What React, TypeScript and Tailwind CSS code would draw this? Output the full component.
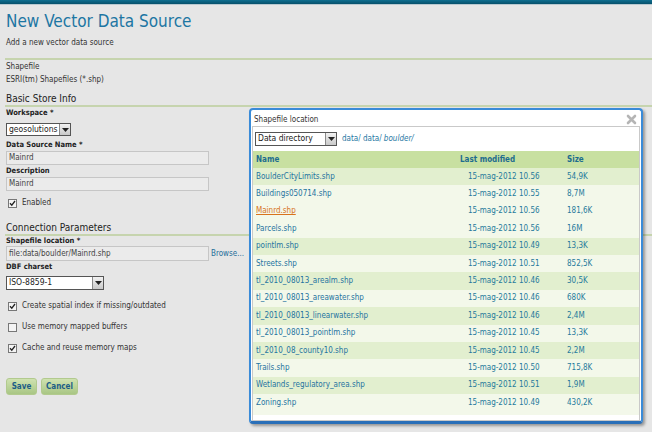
import React from 'react'

const files = [
  { name: 'BoulderCityLimits.shp', date: '15-mag-2012 10.56', size: '54,9K' },
  { name: 'Buildings050714.shp', date: '15-mag-2012 10.55', size: '8,7M' },
  { name: 'Mainrd.shp', date: '15-mag-2012 10.56', size: '181,6K', hover: true },
  { name: 'Parcels.shp', date: '15-mag-2012 10.56', size: '16M' },
  { name: 'pointlm.shp', date: '15-mag-2012 10.49', size: '13,3K' },
  { name: 'Streets.shp', date: '15-mag-2012 10.51', size: '852,5K' },
  { name: 'tl_2010_08013_arealm.shp', date: '15-mag-2012 10.46', size: '30,5K' },
  { name: 'tl_2010_08013_areawater.shp', date: '15-mag-2012 10.46', size: '680K' },
  { name: 'tl_2010_08013_linearwater.shp', date: '15-mag-2012 10.46', size: '2,4M' },
  { name: 'tl_2010_08013_pointlm.shp', date: '15-mag-2012 10.45', size: '13,3K' },
  { name: 'tl_2010_08_county10.shp', date: '15-mag-2012 10.45', size: '2,2M' },
  { name: 'Trails.shp', date: '15-mag-2012 10.50', size: '715,8K' },
  { name: 'Wetlands_regulatory_area.shp', date: '15-mag-2012 10.51', size: '1,9M' },
  { name: 'Zoning.shp', date: '15-mag-2012 10.49', size: '430,2K' },
]

const font = "font-['DejaVu_Sans_Condensed','DejaVu_Sans',sans-serif]"

const Arrow = () => (
  <span className="flex items-center justify-center w-[11px] h-full bg-gradient-to-b from-[#f2f2f2] to-[#c9c9c9] border-l border-[#8a8a8a]">
    <svg width="7" height="4" viewBox="0 0 7 4"><path d="M0 0h7L3.5 4z" fill="#222" /></svg>
  </span>
)

const Select = ({ value, w, h = 'h-[13px]' }: { value: string; w: string; h?: string }) => (
  <div className={`flex ${h} ${w} bg-white border border-[#555] text-[8.5px] leading-[11px] text-[#222]`}>
    <span className="flex-1 pl-[2px] overflow-hidden whitespace-nowrap">{value}</span>
    <Arrow />
  </div>
)

const Check = ({ checked, label }: { checked: boolean; label: string }) => (
  <div className="flex items-center h-[12px] pl-[2px]">
    <span className="flex items-center justify-center w-[9px] h-[9px] border border-[#777] bg-[#f4f4f4]">
      {checked && (
        <svg width="7" height="7" viewBox="0 0 7 7"><path d="M1 3.2l1.8 2L6 1" stroke="#222" strokeWidth="1.3" fill="none" /></svg>
      )}
    </span>
    <span className="ml-[5px] text-[8px] text-[#333]">{label}</span>
  </div>
)

const Input = ({ value, h = 'h-[14px]' }: { value: string; h?: string }) => (
  <div className={`flex items-center ${h} w-[203px] border border-[#c6c6c6] bg-[#ebebeb] text-[8px] text-[#444] px-[2px]`}>
    {value}
  </div>
)

const Label = ({ children }: { children: React.ReactNode }) => (
  <div className="text-[7.5px] leading-[10px] font-bold text-[#222]">{children}</div>
)

const Heading = ({ children }: { children: React.ReactNode }) => (
  <>
    <div className="pl-[6px] text-[10px] leading-[12px] text-[#222]">{children}</div>
    <div className="ml-[5px] h-[2px] bg-[#c6d4ae]" />
  </>
)

const Button = ({ children, w }: { children: React.ReactNode; w: string }) => (
  <div className={`flex items-center justify-center h-[17px] ${w} rounded-[3px] border border-[#b2ca8e] bg-gradient-to-b from-[#cfe2b0] to-[#a9c684] text-[8px] font-bold text-[#1c5d87]`}>
    {children}
  </div>
)

export default function App() {
  return (
    <div className={`relative w-[652px] h-[432px] overflow-hidden bg-[#e6e6e6] ${font}`}>
      <div className="h-[4px] bg-gradient-to-b from-[#0f6f90] to-[#06506b]" />
      <div className="h-[1px] bg-[#b9c9d0]" />

      <div className="pl-[6px]">
        <h1 className="mt-[5px] text-[17px] leading-[22px] text-[#1d76a3]">New Vector Data Source</h1>
        <p className="mt-[5px] text-[8px] leading-[12px] text-[#333]">Add a new vector data source</p>
      </div>
      <div className="mt-[9px] ml-[5px] h-[2px] bg-[#c6d4ae]" />
      <div className="pl-[6px] text-[8px] leading-[13px] text-[#333]">
        <div>Shapefile</div>
        <div>ESRI(tm) Shapefiles (*.shp)</div>
      </div>

      <div className="mt-[7px]">
        <Heading>Basic Store Info</Heading>
      </div>

      <div className="pl-[6px] flex flex-col">
        <div className="mt-[1px]"><Label>Workspace *</Label></div>
        <div className="mt-[5px]"><Select value="geosolutions" w="w-[65px]" /></div>
        <div className="mt-[4px]"><Label>Data Source Name *</Label></div>
        <div className="mt-[1px]"><Input value="Mainrd" /></div>
        <div className="mt-[1px]"><Label>Description</Label></div>
        <div className="mt-[1px]"><Input value="Mainrd" /></div>
        <div className="mt-[6px]"><Check checked label="Enabled" /></div>
      </div>

      <div className="mt-[13px]">
        <Heading>Connection Parameters</Heading>
      </div>

      <div className="pl-[6px] flex flex-col">
        <Label>Shapefile location *</Label>
        <div className="flex items-center">
          <Input value="file:data/boulder/Mainrd.shp" h="h-[15px]" />
          <span className="ml-[2px] text-[8px] text-[#1f6f9a]">Browse...</span>
        </div>
        <div className="mt-[1px]"><Label>DBF charset</Label></div>
        <div className="mt-[4px]"><Select value="ISO-8859-1" w="w-[98px]" h="h-[14px]" /></div>
        <div className="mt-[10px]"><Check checked label="Create spatial index if missing/outdated" /></div>
        <div className="mt-[9px]"><Check checked={false} label="Use memory mapped buffers" /></div>
        <div className="mt-[9px]"><Check checked label="Cache and reuse memory maps" /></div>
        <div className="mt-[24px] flex gap-[4px]">
          <Button w="w-[31px]">Save</Button>
          <Button w="w-[37px]">Cancel</Button>
        </div>
      </div>

      {/* file chooser dialog */}
      <div className="absolute left-[249px] top-[108px] w-[394px] h-[316px] rounded-[4px] border-2 border-[#3a8bd8] border-b-[3px] border-b-[#2a6fb8] bg-white shadow-[2px_2px_3px_rgba(0,0,0,0.35)] flex flex-col">
        <div className="flex items-start justify-between h-[16px] pt-[3px] px-[3px] text-[8px] leading-[13px] text-[#333]">
          <span>Shapefile location</span>
          <svg width="11" height="11" viewBox="0 0 11 11" className="mr-[1px] mt-[1px]">
            <path d="M2 2l7 7M9 2l-7 7" stroke="#b5b5b5" strokeWidth="2.6" strokeLinecap="round" />
          </svg>
        </div>
        <div className="mx-[1px] flex-1 border border-[#c9c9c9] flex flex-col pb-[5px]">
          <div className="flex items-center h-[24px] px-[2px]">
            <Select value="Data directory" w="w-[82px]" h="h-[14px]" />
            <span className="ml-[5px] text-[8px] text-[#1f78a3]">data/ data/ <i>boulder/</i></span>
          </div>
          <div className="flex-1 bg-[#f3f8ea] flex flex-col">
            <div className="flex items-center h-[17px] bg-[#c8e0a1] text-[8px] font-bold text-[#1d6c8e]">
              <span className="w-[207px] pl-[3px]">Name</span>
              <span className="w-[107px]">Last modified</span>
              <span>Size</span>
            </div>
            {files.map((f, i) => (
              <div
                key={f.name}
                className={`flex items-center h-[17.4px] text-[8px] ${i % 2 === 0 && !f.hover ? 'bg-[#e2efcf]' : ''}`}
              >
                <span className={`w-[207px] pl-[3px] ${f.hover ? 'text-[#d8731d] underline' : 'text-[#1f74a0]'}`}>{f.name}</span>
                <span className="w-[107px] pl-[8px] text-[#267a9c]">{f.date}</span>
                <span className="text-[#267a9c]">{f.size}</span>
              </div>
            ))}
          </div>
        </div>
      </div>
    </div>
  )
}
